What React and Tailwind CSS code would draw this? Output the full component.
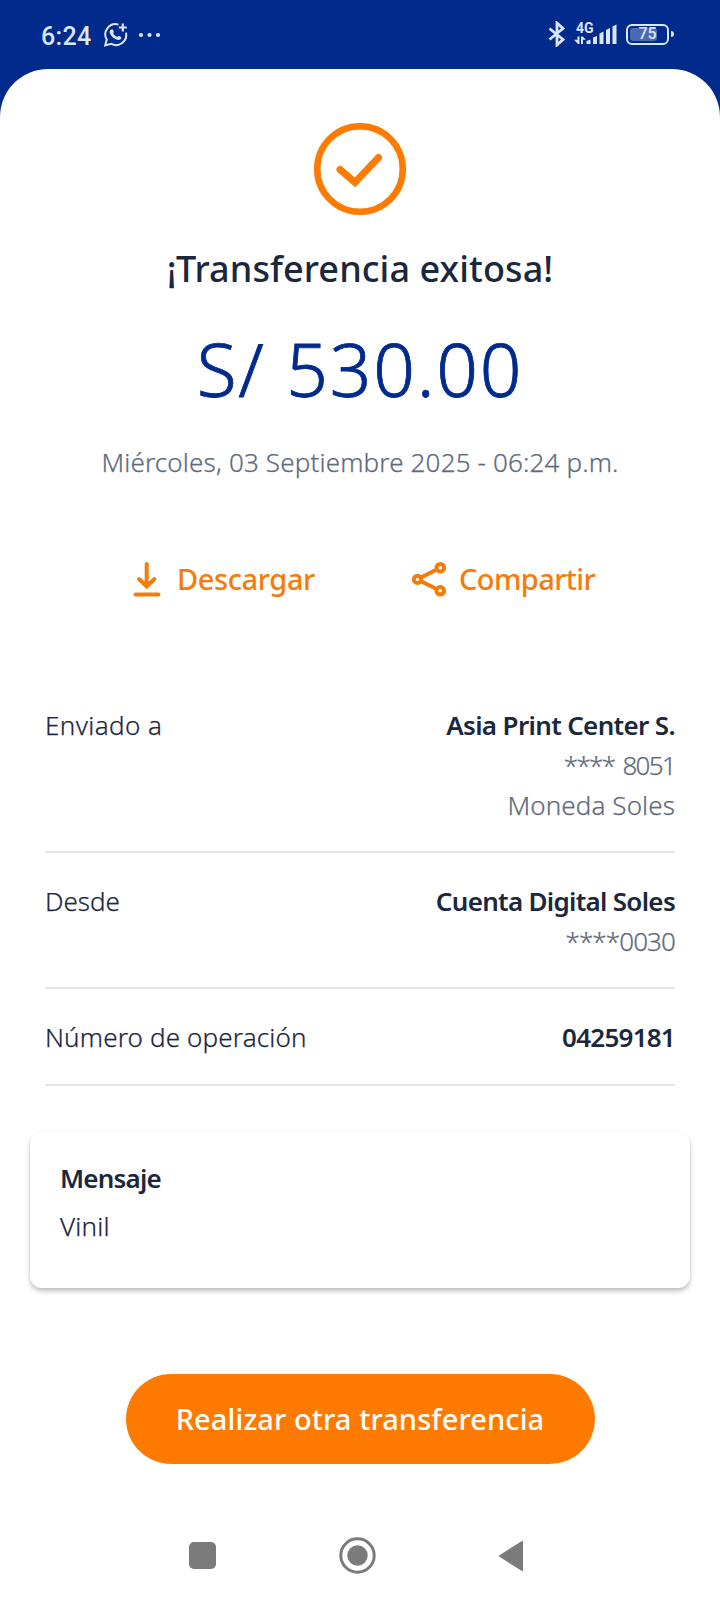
const detalles = [
  {
    etiqueta: 'Enviado a',
    ancho: 'tracking-[0.4px]',
    valores: [
      { texto: 'Asia Print Center S.', clase: 'font-semibold text-[#1b273d] tracking-[-0.65px]' },
      { texto: '**** 8051', clase: 'font-light text-[#5f6b7d] tracking-[-1.7px] [word-spacing:3px] [-webkit-text-stroke:0.25px]' },
      { texto: 'Moneda Soles', clase: 'font-light text-[#5f6b7d] tracking-[0.1px] [-webkit-text-stroke:0.25px]' },
    ],
  },
  {
    etiqueta: 'Desde',
    ancho: 'tracking-normal',
    valores: [
      { texto: 'Cuenta Digital Soles', clase: 'font-semibold text-[#1b273d] tracking-[-0.7px]' },
      { texto: '****0030', clase: 'font-light text-[#5f6b7d] tracking-[-0.9px] [-webkit-text-stroke:0.25px]' },
    ],
  },
  {
    etiqueta: 'Número de operación',
    ancho: 'tracking-[0.15px]',
    valores: [
      { texto: '04259181', clase: 'font-semibold text-[#1b273d] tracking-[-0.75px]' },
    ],
  },
]

function BarraEstado() {
  return (
    <header className="h-[69px] flex justify-between items-start pl-[41px] pr-[46px] text-[#dce6fb] font-[Roboto,sans-serif]">
      <div className="flex items-center h-[70px]">
        <span className="pt-[2px] text-[25px] leading-none font-medium w-[63px] tracking-[0.3px]">6:24</span>
        <svg width="24" height="24" viewBox="0 0 24 24" fill="none" stroke="currentColor" strokeWidth="2">
          <path d="M14.5 1.6A10.3 10.3 0 0 0 2.7 16.6L1.2 22.4l6-1.5A10.3 10.3 0 0 0 22 9.6" />
          <path d="M18.8 0.5v8M14.8 4.5h8" strokeWidth="2.2" />
          <path d="M6.8 6.8c1.1-1 2-.6 2.6.8.6 1.5.4 1.8-.2 2.7 1 1.8 2.1 2.9 4 3.8.9-1.1 1.4-1.3 2.8-.7 1.7.8 1.9 1.5.8 2.6-1.5 1.6-3.9 1.2-6.3-.4-2.3-1.6-3.8-3.4-4.6-5.4-.5-1.3-.2-2.4.9-3.4z" fill="currentColor" stroke="none" />
        </svg>
        <svg className="ml-[10px]" width="24" height="6" viewBox="0 0 24 6" fill="currentColor">
          <circle cx="3" cy="3" r="2.1" />
          <circle cx="11.5" cy="3" r="2.1" />
          <circle cx="20" cy="3" r="2.1" />
        </svg>
      </div>

      <div className="flex items-center h-[68px]">
        <svg width="18" height="26" viewBox="0 0 18 26" fill="none" stroke="currentColor" strokeWidth="2.8">
          <path d="M1.5 7.5L15 18.5 9 24V2l6 5.5L1.5 18.5" />
        </svg>
        <div className="ml-[8px] w-[44px] h-[24px] relative">
          <svg width="44" height="24" viewBox="0 0 44 24" fill="currentColor">
            <path d="M0 17.8h3.5V14.5h2V22H4zM7 14.5h1.8l3 3.3H9V22H7z" />
            <path d="M12.5 19l4-1.5V22h-4zM19 15.5l4-1.5v8h-4zM25.5 11.5l4-2V22h-4zM32 8l4-2v16h-4zM38.5 4.5l4-2V22h-4z" />
          </svg>
          <span className="absolute left-[2px] top-[-1px] text-[14px] leading-none font-bold">4G</span>
        </div>
        <div className="ml-[8px] w-[43px] h-[21px] rounded-[6px] border-2 border-current p-[2px] relative">
          <div className="h-full w-[27px] rounded-[3px] bg-[#4b68b5]" />
          <span className="absolute inset-0 flex items-center justify-center text-[16px] leading-none font-medium">75</span>
        </div>
        <div className="ml-[2px] w-[3px] h-[6px] rounded-r bg-current" />
      </div>
    </header>
  )
}

function BarraNavegacion() {
  return (
    <nav className="mt-[73px] h-[37px] w-[335px] ml-[189px] flex items-center justify-between">
      <div className="size-[27px] rounded-[5px] bg-[#7b7b7b]" />
      <svg width="37" height="37" viewBox="0 0 37 37">
        <circle cx="18.5" cy="18.5" r="16.7" fill="none" stroke="#7b7b7b" strokeWidth="3" />
        <circle cx="18.5" cy="18.5" r="10.2" fill="#7b7b7b" />
      </svg>
      <svg width="26" height="32" viewBox="0 0 26 32">
        <path d="M2 16L24 2v28z" fill="#7b7b7b" stroke="#7b7b7b" strokeWidth="2" strokeLinejoin="round" />
      </svg>
    </nav>
  )
}

export default function App() {
  return (
    <div className="w-[720px] h-[1600px] bg-[#002a8c] overflow-hidden font-['Noto_Sans',sans-serif]">
      <BarraEstado />

      <main className="bg-white h-[1531px] rounded-t-[48px] flex flex-col">
        <div className="flex flex-col items-center pt-[53px]">
          <svg width="94" height="94" viewBox="0 0 94 94" fill="none" stroke="#ff7a00" strokeLinecap="round">
            <circle cx="47" cy="47" r="42.8" strokeWidth="6.5" />
            <path d="M27 47.5L42 60.5L65.5 35.5" strokeWidth="7" />
          </svg>
          <h1 className="mt-[29px] text-[36px] leading-[48px] font-medium text-[#1b273d] tracking-[0.1px]">¡Transferencia exitosa!</h1>
          <p className="mt-[31px] text-[73px] leading-[90px] font-light text-[#002a8c] tracking-[1.8px] [-webkit-text-stroke:0.8px]">S/ 530.00</p>
          <p className="mt-[28px] text-[26px] leading-[40px] font-light text-[#5f6b7d] tracking-[0.16px] [-webkit-text-stroke:0.25px]">Miércoles, 03 Septiembre 2025 - 06:24 p.m.</p>
        </div>

        <div className="mt-[77px] pl-[133px] h-10 flex items-center text-[29px] leading-[40px] font-medium text-[#f57c0b]">
          <button className="flex items-center w-[279px]">
            <svg width="28" height="36" viewBox="0 0 28 36" fill="none" stroke="currentColor" strokeWidth="4" strokeLinecap="round">
              <path d="M13.7 3v22M6 18l7.7 7.5L21.4 18M2.5 33.5h23" />
            </svg>
            <span className="ml-[16px] tracking-[-0.4px]">Descargar</span>
          </button>
          <button className="flex items-center">
            <svg width="35" height="36" viewBox="0 0 35 36" fill="none" stroke="currentColor" strokeWidth="4">
              <circle cx="5.5" cy="18.3" r="3.6" />
              <circle cx="28.3" cy="6.7" r="3.8" />
              <circle cx="28.3" cy="29.8" r="3.8" />
              <path d="M9 16.5l15.7-8M9 20.2L24.7 28" />
            </svg>
            <span className="ml-[12px] tracking-[-0.6px]">Compartir</span>
          </button>
        </div>

        <div className="mt-[106px] mx-[45px] text-[26px] leading-[40px]">
          {detalles.map((d, i) => (
            <div key={d.etiqueta} className={`flex justify-between pb-[26px] border-b-2 border-[#e6e6e8] last:pb-[27px] ${i > 0 ? 'pt-7' : ''}`}>
              <span className={`font-light text-[#1b273d] [-webkit-text-stroke:0.25px] ${d.ancho}`}>{d.etiqueta}</span>
              <div className="flex flex-col items-end">
                {d.valores.map((v) => (
                  <span key={v.texto} className={v.clase}>{v.texto}</span>
                ))}
              </div>
            </div>
          ))}
        </div>

        <section className="mt-[46px] mx-[30px] h-[156px] pt-[26px] pl-[30px] rounded-xl bg-white shadow-[0_3px_5px_rgba(0,0,0,0.26)] text-[26px] leading-[40px] text-[#1b273d]">
          <h2 className="font-semibold tracking-[-0.8px]">Mensaje</h2>
          <p className="mt-2 font-light tracking-[0.2px] [-webkit-text-stroke:0.25px]">Vinil</p>
        </section>

        <button className="mt-[86px] mx-auto w-[469px] h-[90px] shrink-0 rounded-full bg-[#ff7a00] text-white text-[29px] leading-[40px] font-medium tracking-[0.1px]">Realizar otra transferencia</button>

        <BarraNavegacion />
      </main>
    </div>
  )
}
